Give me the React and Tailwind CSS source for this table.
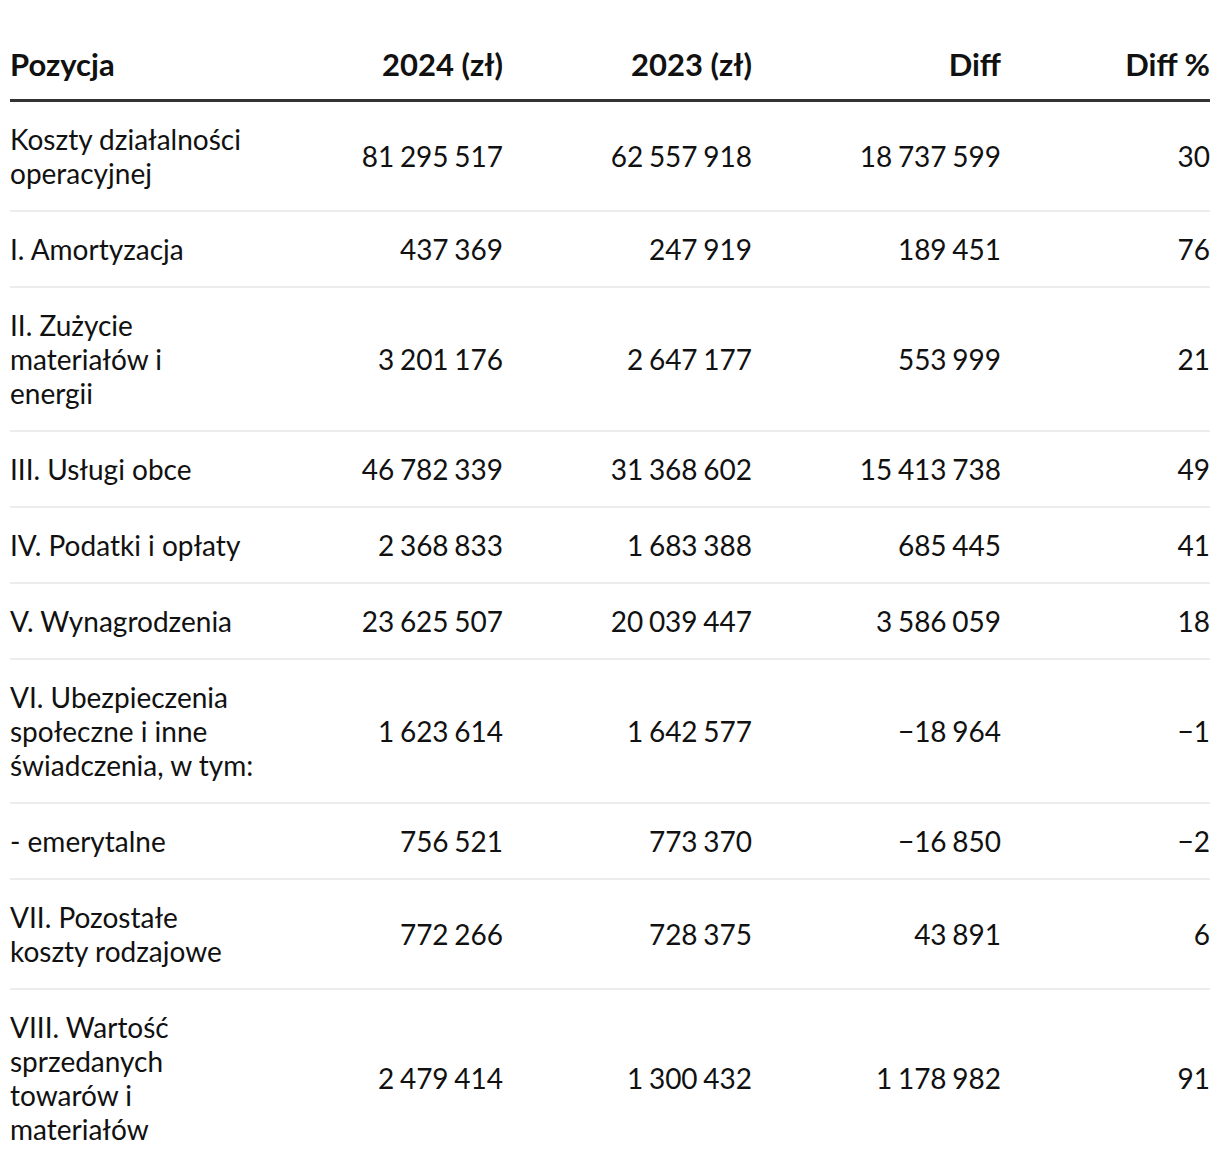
import React from 'react'

// labels are split into lines exactly as they wrap in the layout
const rows = [
  [['Koszty działalności', 'operacyjnej'], '81 295 517', '62 557 918', '18 737 599', '30'],
  [['I. Amortyzacja'], '437 369', '247 919', '189 451', '76'],
  [['II. Zużycie', 'materiałów i', 'energii'], '3 201 176', '2 647 177', '553 999', '21'],
  [['III. Usługi obce'], '46 782 339', '31 368 602', '15 413 738', '49'],
  [['IV. Podatki i opłaty'], '2 368 833', '1 683 388', '685 445', '41'],
  [['V. Wynagrodzenia'], '23 625 507', '20 039 447', '3 586 059', '18'],
  [['VI. Ubezpieczenia', 'społeczne i inne', 'świadczenia, w tym:'], '1 623 614', '1 642 577', '−18 964', '−1'],
  [['- emerytalne'], '756 521', '773 370', '−16 850', '−2'],
  [['VII. Pozostałe', 'koszty rodzajowe'], '772 266', '728 375', '43 891', '6'],
  [['VIII. Wartość', 'sprzedanych', 'towarów i', 'materiałów'], '2 479 414', '1 300 432', '1 178 982', '91'],
]

const headers = ['Pozycja', '2024 (zł)', '2023 (zł)', 'Diff', 'Diff %']

// numbers use non-breaking spaces so they never wrap
const nb = s => s.replace(/ /g, '\u00a0')

export default function App() {
  return (
    <div className="bg-white px-[10px] text-[28px] leading-[34px] text-[#111]" style={{ fontFamily: 'Lato, "Noto Sans", sans-serif' }}>
      {/* Header */}
      <div className="grid grid-cols-[242px_251px_249px_249px_209px] border-b-[3px] border-[#333] pt-[47px] pb-[18px] text-[31px] font-bold">
        {headers.map((h, i) => (
          <div key={h} className={i === 0 ? 'text-left' : 'text-right'}>
            {h}
          </div>
        ))}
      </div>

      {/* Body */}
      {rows.map(([label, ...values], r) => (
        <div
          key={r}
          className={`grid grid-cols-[242px_251px_249px_249px_209px] items-center py-[20px] ${
            r < rows.length - 1 ? 'border-b-2 border-[#ececec]' : ''
          }`}
        >
          <div className="whitespace-nowrap">
            {label.map(line => (
              <div key={line}>{line}</div>
            ))}
          </div>
          {values.map((v, i) => (
            <div key={i} className="text-right [word-spacing:-1.5px]">
              {nb(v)}
            </div>
          ))}
        </div>
      ))}
    </div>
  )
}
